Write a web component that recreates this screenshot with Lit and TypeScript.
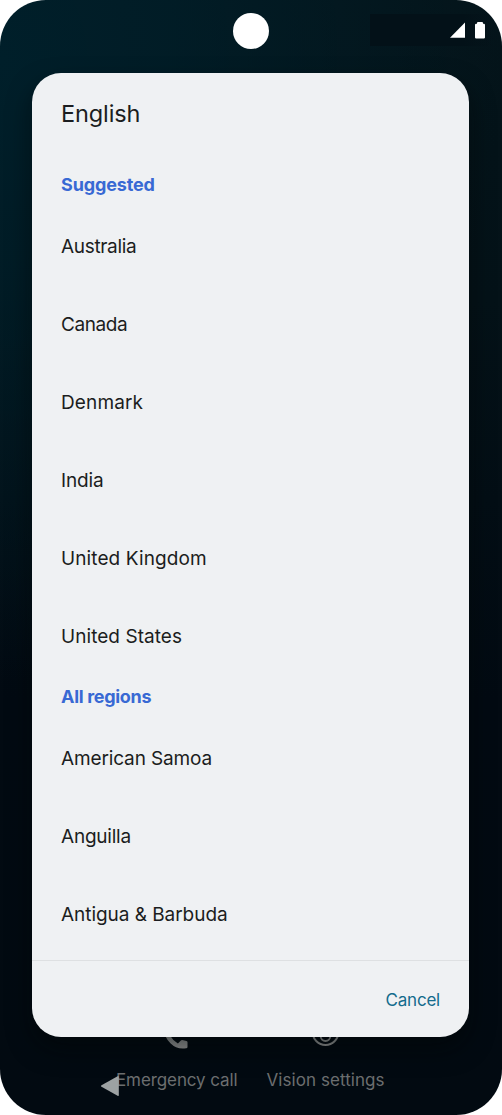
import { LitElement, html, css } from "lit";
import { customElement, property } from "lit/decorators.js";
import { styleMap } from "lit/directives/style-map.js";

const FAMILY = '"Inter", "Noto Sans", sans-serif';
const ctx = document.createElement("canvas").getContext("2d")!;

/** Tracking that makes a label take up the given width. */
function tracking(text: string, width: number, size: number, weight: number) {
  ctx.font = `${weight} ${size}px ${FAMILY}`;
  const m = ctx.measureText(text);
  const ink = m.actualBoundingBoxRight + m.actualBoundingBoxLeft;
  return (width - ink) / (text.length - 1);
}

@customElement("fit-label")
class FitLabel extends LitElement {
  @property() text = "";
  @property({ type: Number }) width = 0;
  @property({ type: Number }) size = 19;
  @property({ type: Number }) weight = 400;

  static styles = css`
    :host {
      display: inline-block;
      white-space: nowrap;
    }
    .label {
      font-family: "Inter", "Noto Sans", sans-serif;
    }
  `;

  render() {
    return html`<span
      class="label"
      style=${styleMap({
        fontSize: `${this.size}px`,
        fontWeight: `${this.weight}`,
        letterSpacing: `${tracking(this.text, this.width, this.size, this.weight).toFixed(3)}px`,
      })}
      >${this.text}</span
    >`;
  }
}

type Region = { name: string; width: number };

const SUGGESTED: Region[] = [
  { name: "Australia", width: 75 },
  { name: "Canada", width: 65 },
  { name: "Denmark", width: 81.5 },
  { name: "India", width: 41 },
  { name: "United Kingdom", width: 144 },
  { name: "United States", width: 120 },
];

const ALL: Region[] = [
  { name: "American Samoa", width: 150.5 },
  { name: "Anguilla", width: 69.5 },
  { name: "Antigua & Barbuda", width: 166 },
];

@customElement("app-root")
class AppRoot extends LitElement {
  static styles = css`
    :host {
      display: block;
      background: #fff;
    }
    .phone {
      position: relative;
      box-sizing: border-box;
      width: 502px;
      height: 1115px;
      padding: 73px 33px 0 32px;
      border-radius: 46px;
      overflow: hidden;
      background:
        radial-gradient(ellipse 500px 620px at 0 60px, #001f2a 0%, rgba(0, 31, 42, 0.75) 35%, rgba(0, 31, 42, 0) 100%),
        linear-gradient(#04141a 0, #041218 300px, #020a12 700px, #020a11 100%);
    }
    .camera {
      position: absolute;
      left: 233px;
      top: 13px;
      width: 36px;
      height: 36px;
      border-radius: 50%;
      background: #fff;
    }
    .patch {
      position: absolute;
      left: 370px;
      top: 14px;
      width: 124px;
      height: 32px;
      background: linear-gradient(90deg, #031118, #031118 75%, rgba(3, 17, 24, 0));
    }
    .status {
      position: absolute;
      left: 449px;
      top: 21px;
      fill: #fff;
    }
    .dialog {
      position: relative;
      display: flex;
      flex-direction: column;
      box-sizing: border-box;
      height: 964px;
      border-radius: 29px;
      background: #eff1f3;
      color: #1b1d20;
      box-shadow: 0 12px 24px 0 rgba(0, 6, 6, 0.5);
    }
    .title,
    .heading,
    .row {
      display: flex;
      align-items: center;
      box-sizing: border-box;
      flex: none;
      padding-left: 29px;
    }
    .title {
      height: 80px;
      margin-bottom: 10px;
    }
    .heading {
      height: 44px;
      padding-bottom: 2px;
      color: #3869d4;
    }
    .row {
      height: 78px;
    }
    .footer {
      display: flex;
      align-items: center;
      justify-content: flex-end;
      box-sizing: border-box;
      height: 77px;
      margin-top: auto;
      padding: 2px 29px 0 0;
      border-top: 1px solid #dee0e2;
      color: #136b8c;
    }
    .shortcuts {
      position: absolute;
      left: 116px;
      top: 1022px;
      display: flex;
      gap: 29px;
      color: #6c6e6f;
    }
    .shortcut {
      display: flex;
      flex-direction: column;
      align-items: center;
      gap: 20px;
    }
    .glyph {
      display: block;
    }
    .back {
      position: absolute;
      left: 100px;
      top: 1075px;
      fill: #9da2a3;
    }
  `;

  private rows(list: Region[]) {
    return list.map(
      (r) => html`<div class="row"><fit-label text=${r.name} width=${r.width} size="19"></fit-label></div>`
    );
  }

  render() {
    return html`
      <div class="phone">
        <div class="patch"></div>
        <div class="camera"></div>
        <svg class="status" width="37" height="19" viewBox="0 0 37 19">
          <path d="M1 16.8 16 1.6V16.8Z" />
          <path d="M29 1h4q1 0 1 1v.8h.8q1.2 0 1.2 1.2v12.400q0 1.100-1.200 1.100h-7.600q-1.200 0-1.200-1.100V4q0-1.200 1.200-1.200h.8V2q0-1 1-1Z" />
        </svg>
        <div class="shortcuts">
          <div class="shortcut">
            <svg class="glyph" width="28" height="28" viewBox="0 0 28 28" fill="#949696">
              <path
                d="M5.500 1.400h4.600q1 0 1.200 1l.9 4q.2.900-.4 1.500l-3.200 3.200q2.700 4.900 7.500 7.500l3-3.100q.6-.6 1.400-.4l4.200.9q1 .200 1 1.200v4.800q0 1.400-1.400 1.400Q15 24.900 8.600 18.400 2 11.800 2 4.200 2 1.400 5.500 1.400Z"
                transform="translate(-1.200 2.900)"
              />
            </svg>
            <fit-label text="Emergency call" width="119.500" size="17"></fit-label>
          </div>
          <div class="shortcut">
            <svg class="glyph" width="28" height="28" viewBox="0 0 28 28" fill="none" stroke="#949696" stroke-width="2">
              <circle cx="13.500" cy="10.200" r="12.800" />
              <circle cx="13.500" cy="14.200" r="4.800" />
            </svg>
            <fit-label text="Vision settings" width="118" size="17"></fit-label>
          </div>
        </div>
        <svg class="back" width="20" height="22" viewBox="0 0 20 22">
          <path d="M1.500 10.200 17.600 1.200q1.200-.6 1.200.8v18q0 1.300-1.200.7L1.500 11.800q-1.300-.8 0-1.600Z" />
        </svg>
        <div class="dialog">
          <div class="title"><fit-label text="English" width="76.500" size="23.500"></fit-label></div>
          <div class="heading"><fit-label text="Suggested" width="93.500" size="18" weight="700"></fit-label></div>
          ${this.rows(SUGGESTED)}
          <div class="heading"><fit-label text="All regions" width="90.500" size="18" weight="700"></fit-label></div>
          ${this.rows(ALL)}
          <div class="footer"><fit-label text="Cancel" width="52.500" size="17"></fit-label></div>
        </div>
      </div>
    `;
  }
}
